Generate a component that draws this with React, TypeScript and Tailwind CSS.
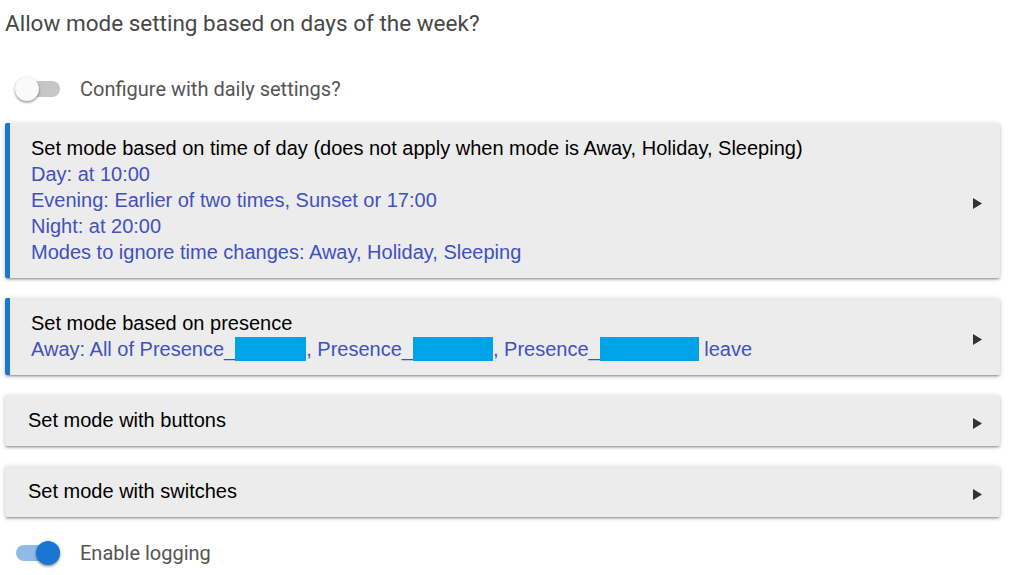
import React from "react";

const Arrow = () => (
  <svg width="9" height="11" viewBox="0 0 9 11" className="shrink-0 mt-[6px]">
    <path d="M0 0 L9 5.5 L0 11 Z" fill="#333333" />
  </svg>
);

const Toggle = ({ on }: { on: boolean }) => (
  <div className="relative w-[46px] h-[40px] flex items-center">
    <div
      className={
        "absolute left-[1px] w-[44px] h-[16px] rounded-full " +
        (on ? "bg-[#8fbbe8]" : "bg-[#c6c6c6]")
      }
    />
    <div
      className={
        "absolute w-[24px] h-[24px] rounded-full shadow-[0_1px_3px_rgba(0,0,0,0.35),0_2px_2px_rgba(0,0,0,0.14)] " +
        (on ? "left-[21px] bg-[#1976d2]" : "left-0 bg-[#fafafa]")
      }
    />
  </div>
);

const Card = ({
  accent,
  children,
}: {
  accent?: boolean;
  children: React.ReactNode;
}) => (
  <div
    className={
      "flex items-center justify-between bg-[#ececec] rounded-[2px] pr-[18px] pt-[12px] pb-[13px] shadow-[0_2px_2px_0_rgba(0,0,0,0.14),0_3px_1px_-2px_rgba(0,0,0,0.12),0_1px_5px_0_rgba(0,0,0,0.2)] " +
      (accent ? "border-l-[5px] border-[#1976d2] pl-[21px]" : "pl-[23px]")
    }
  >
    <div className="text-[20px] leading-[26px]">{children}</div>
    <Arrow />
  </div>
);

const Box = ({ w }: { w: number }) => (
  <span
    className="inline-block h-[24px] bg-[#00a2e8]"
    style={{ width: w }}
  />
);

export default function App() {
  return (
    <div
      className="w-[1009px] h-[575px] bg-white overflow-hidden pl-[5px] pr-[9px]"
      style={{ fontFamily: "Arial, 'Liberation Sans', sans-serif" }}
    >
      <div
        className="pt-[8px] text-[22.5px] leading-[30px] text-[#474747]"
        style={{ fontFamily: "Roboto, sans-serif" }}
      >
        Allow mode setting based on days of the week?
      </div>

      <div className="mt-[31px] flex items-center pl-[10px] h-[40px]">
        <Toggle on={false} />
        <span
          className="ml-[19px] text-[20px] text-[#555555]"
          style={{ fontFamily: "Roboto, sans-serif" }}
        >
          Configure with daily settings?
        </span>
      </div>

      <div className="mt-[14px] flex flex-col gap-[20px]">
        <Card accent>
          <div className="text-black">
            Set mode based on time of day (does not apply when mode is Away,
            Holiday, Sleeping)
          </div>
          <div className="text-[#3f51c0]">Day: at 10:00</div>
          <div className="text-[#3f51c0]">
            Evening: Earlier of two times, Sunset or 17:00
          </div>
          <div className="text-[#3f51c0]">Night: at 20:00</div>
          <div className="text-[#3f51c0]">
            Modes to ignore time changes: Away, Holiday, Sleeping
          </div>
        </Card>

        <Card accent>
          <div className="text-black">Set mode based on presence</div>
          <div className="text-[#3f51c0] flex items-center whitespace-pre">
            <span>Away: All of Presence_</span>
            <Box w={71} />
            <span>, Presence_</span>
            <Box w={80} />
            <span>, Presence_</span>
            <Box w={99} />
            <span> leave</span>
          </div>
        </Card>

        <Card>
          <div className="text-black">Set mode with buttons</div>
        </Card>

        <Card>
          <div className="text-black">Set mode with switches</div>
        </Card>
      </div>

      <div className="mt-[16px] flex items-center pl-[10px] h-[40px]">
        <Toggle on={true} />
        <span
          className="ml-[19px] text-[20px] text-[#555555]"
          style={{ fontFamily: "Roboto, sans-serif" }}
        >
          Enable logging
        </span>
      </div>
    </div>
  );
}
